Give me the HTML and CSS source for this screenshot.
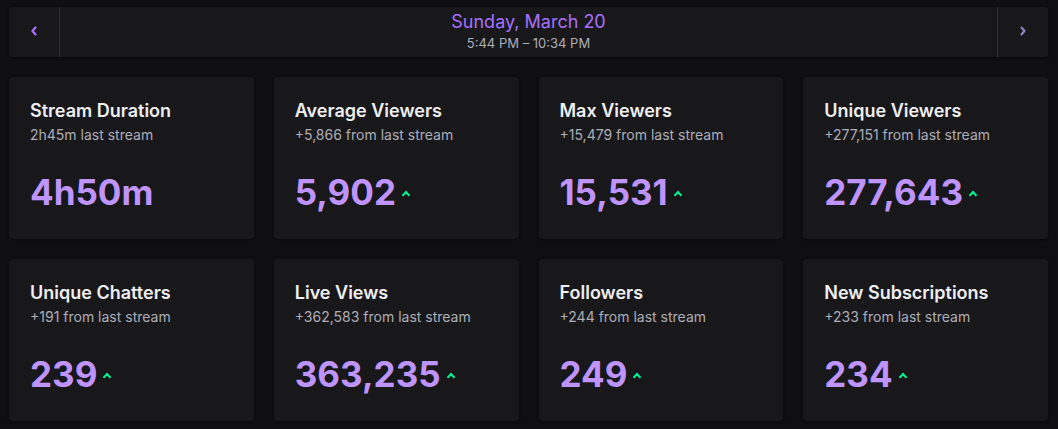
FILE: index.html
```html
<!DOCTYPE html>
<html lang="en">
<head>
    <meta charset="UTF-8">
    <meta name="viewport" content="width=device-width, initial-scale=1.0">
    <title>Stream Summary</title>
    <link rel="stylesheet" href="styles.css">
</head>
<body>
    <div class="day-nav">
        <button class="nav-btn">
            <svg width="8" height="10" viewBox="0 0 8 10"><path d="M5.5 1.5 L2.5 5 L5.5 8.5" fill="none" stroke="#a970ff" stroke-width="2.2" stroke-linecap="round" stroke-linejoin="round"/></svg>
        </button>
        <div class="day-info">
            <div class="day-date">Sunday, March 20</div>
            <div class="day-time">5:44 PM &ndash; 10:34 PM</div>
        </div>
        <button class="nav-btn next">
            <svg width="8" height="10" viewBox="0 0 8 10"><path d="M2.5 1.5 L5.5 5 L2.5 8.5" fill="none" stroke="#8f86c6" stroke-width="2" stroke-linecap="round" stroke-linejoin="round"/></svg>
        </button>
    </div>

    <div class="stats">
        <div class="card">
            <div class="card-title">Stream Duration</div>
            <div class="card-sub">2h45m last stream</div>
            <div class="card-value">4h50m</div>
        </div>
        <div class="card">
            <div class="card-title">Average Viewers</div>
            <div class="card-sub">+5,866 from last stream</div>
            <div class="card-value">5,902 <span class="up"></span></div>
        </div>
        <div class="card">
            <div class="card-title">Max Viewers</div>
            <div class="card-sub">+15,479 from last stream</div>
            <div class="card-value">15,531 <span class="up"></span></div>
        </div>
        <div class="card">
            <div class="card-title">Unique Viewers</div>
            <div class="card-sub">+277,151 from last stream</div>
            <div class="card-value">277,643 <span class="up"></span></div>
        </div>
        <div class="card">
            <div class="card-title">Unique Chatters</div>
            <div class="card-sub">+191 from last stream</div>
            <div class="card-value">239 <span class="up"></span></div>
        </div>
        <div class="card">
            <div class="card-title">Live Views</div>
            <div class="card-sub">+362,583 from last stream</div>
            <div class="card-value">363,235 <span class="up"></span></div>
        </div>
        <div class="card">
            <div class="card-title">Followers</div>
            <div class="card-sub">+244 from last stream</div>
            <div class="card-value">249 <span class="up"></span></div>
        </div>
        <div class="card">
            <div class="card-title">New Subscriptions</div>
            <div class="card-sub">+233 from last stream</div>
            <div class="card-value">234 <span class="up"></span></div>
        </div>
    </div>
</body>
</html>
```
FILE: styles.css
```css
body {
    font-family: Inter, "Noto Sans", sans-serif;
    margin: 0;
    padding: 7px 10px 8px 9px;
    background-color: #0f0f11;
    color: #efeff1;
}
.day-nav {
    display: flex;
    height: 50px;
    background-color: #18181b;
    border-radius: 3px;
    box-shadow: 0 1px 3px rgba(0, 0, 0, 0.5);
}
.nav-btn {
    width: 51px;
    border: none;
    background: none;
    border-right: 1px solid #2f2f35;
    display: flex;
    align-items: center;
    justify-content: center;
    padding: 0 0 2px 0;
    cursor: pointer;
}
.nav-btn.next {
    border-right: none;
    border-left: 1px solid #2f2f35;
}
.day-info {
    flex: 1;
    text-align: center;
    padding-top: 3px;
}
.day-date {
    color: #a970ff;
    font-size: 18px;
    line-height: 24px;
}
.day-time {
    color: #adadb8;
    font-size: 13px;
    line-height: 16px;
    margin-top: 1px;
}
.stats {
    display: grid;
    grid-template-columns: repeat(4, 1fr);
    gap: 20px;
    margin-top: 20px;
}
.card {
    height: 162px;
    box-sizing: border-box;
    background-color: #18181b;
    border-radius: 4px;
    padding: 22px 21px 0 21px;
    box-shadow: 0 1px 3px rgba(0, 0, 0, 0.5);
}
.card-title {
    font-size: 18px;
    font-weight: 600;
    line-height: 24px;
}
.card-sub {
    color: #adadb8;
    font-size: 14px;
    line-height: 18px;
    margin-top: 3px;
}
.card-value {
    color: #bf94ff;
    font-size: 35px;
    font-weight: 700;
    line-height: 44px;
    margin-top: 26px;
    display: flex;
    align-items: center;
}
.up {
    width: 4px;
    height: 4px;
    border-left: 2px solid #00f593;
    border-top: 2px solid #00f593;
    transform: rotate(45deg);
    margin-left: 7px;
    margin-top: 6px;
}
```
